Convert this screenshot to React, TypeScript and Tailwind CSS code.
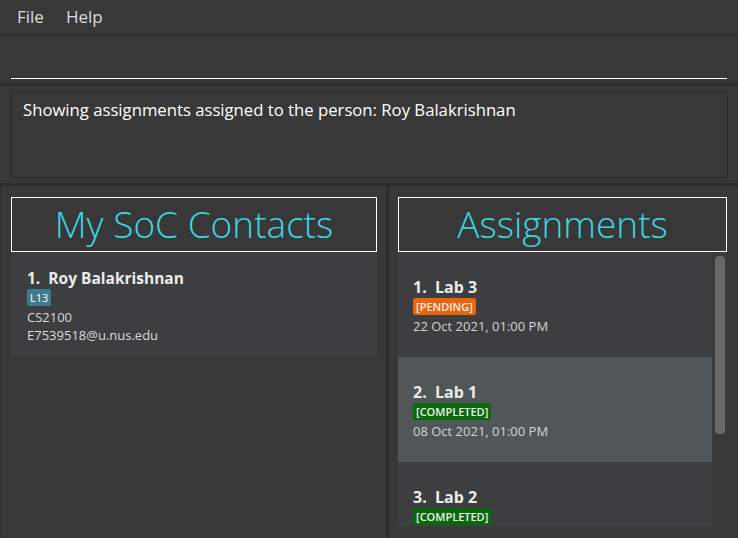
import React from "react";

const font = { fontFamily: '"Open Sans", "Noto Sans", sans-serif' };

interface Assignment {
  title: string;
  status: "PENDING" | "COMPLETED";
  due: string;
}

const assignments: Assignment[] = [
  { title: "Lab 3", status: "PENDING", due: "22 Oct 2021, 01:00 PM" },
  { title: "Lab 1", status: "COMPLETED", due: "08 Oct 2021, 01:00 PM" },
  { title: "Lab 2", status: "COMPLETED", due: "15 Oct 2021, 01:00 PM" },
];

const PanelTitle: React.FC<{ text: string }> = ({ text }) => (
  <div className="h-[55px] border border-white flex items-center justify-center shrink-0">
    <span className="text-[37px] font-light text-[#3dd5e2] leading-none -mt-[2px]">{text}</span>
  </div>
);

const App: React.FC = () => {
  return (
    <div className="w-[738px] h-[538px] bg-[#383838] flex flex-col overflow-hidden text-[#e6e6e6]" style={font}>
      {/* Menu bar */}
      <div className="h-[35px] shrink-0 border-b border-[#2b2b2b] flex items-center pl-[17px] gap-[22px] text-[17px] text-[#dcdcdc]">
        <span>File</span>
        <span>Help</span>
      </div>

      {/* Command box */}
      <div className="h-[48px] shrink-0 pt-[10px] px-[11px]">
        <div className="h-[34px] border-b border-white" />
      </div>
      <div className="h-[3px] shrink-0 bg-[#2d2d2d]" />

      {/* Result display */}
      <div className="h-[97px] shrink-0 py-[5px] pl-[11px] pr-[10px]">
        <div className="h-full border border-[#2a2a2a] px-[11px] pt-[7px] text-[16.7px] text-white leading-[22px]">
          Showing assignments assigned to the person: Roy Balakrishnan
        </div>
      </div>
      <div className="h-[3px] shrink-0 bg-[#2d2d2d]" />

      {/* Panels */}
      <div className="flex-1 flex min-h-0">
        {/* Contacts */}
        <div className="w-[386px] border-l border-[#2d2d2d] pl-[10px] pr-[9px] pt-[11px] flex flex-col">
          <PanelTitle text="My SoC Contacts" />
          <div className="h-[105px] bg-[#3c3e3f] pl-[16px] pt-[15px]">
            <div className="text-[15.5px] font-bold leading-[22px] whitespace-pre text-[#ececec]">1.  Roy Balakrishnan</div>
            <div className="flex">
              <span className="bg-[#3e7b91] text-white text-[11px] leading-[15px] px-[3px] py-[1px] rounded-[2px]">L13</span>
            </div>
            <div className="mt-[2px] text-[13px] leading-[18px] text-[#dcdcdc]">CS2100</div>
            <div className="text-[13px] leading-[18px] text-[#dcdcdc]">E7539518@u.nus.edu</div>
          </div>
        </div>

        <div className="w-[3px] bg-[#2d2d2d]" />

        {/* Assignments */}
        <div className="flex-1 pl-[9px] pr-[11px] pt-[11px] pb-[11px] flex flex-col min-h-0">
          <PanelTitle text="Assignments" />
          <div className="flex-1 flex min-h-0">
            <div className="flex-1 overflow-hidden">
              {assignments.map((a, i) => (
                <div
                  key={a.title}
                  className={`h-[105px] pl-[15px] pt-[24px] ${i === 1 ? "bg-[#515658]" : "bg-[#3c3e3f]"}`}
                >
                  <div className="text-[16px] font-bold leading-[22px] whitespace-pre text-[#ececec]">
                    {`${i + 1}.  ${a.title}`}
                  </div>
                  <div className="flex">
                    <span
                      className={`text-[11px] font-semibold leading-[15px] px-[3px] py-[1px] rounded-[2px] text-[#f0f0f0] ${
                        a.status === "PENDING" ? "bg-[#e8650c]" : "bg-[#0b690d]"
                      }`}
                    >
                      [{a.status}]
                    </span>
                  </div>
                  <div className="mt-[2px] text-[13px] leading-[18px] text-[#d4d4d4]">{a.due}</div>
                </div>
              ))}
            </div>
            {/* Scrollbar */}
            <div className="w-[15px] bg-[#3a3a3a] pl-[3px] pt-[4px]">
              <div className="w-[10px] h-[178px] bg-[#686868] rounded-[4px]" />
            </div>
          </div>
        </div>
      </div>
    </div>
  );
};

export default App;
